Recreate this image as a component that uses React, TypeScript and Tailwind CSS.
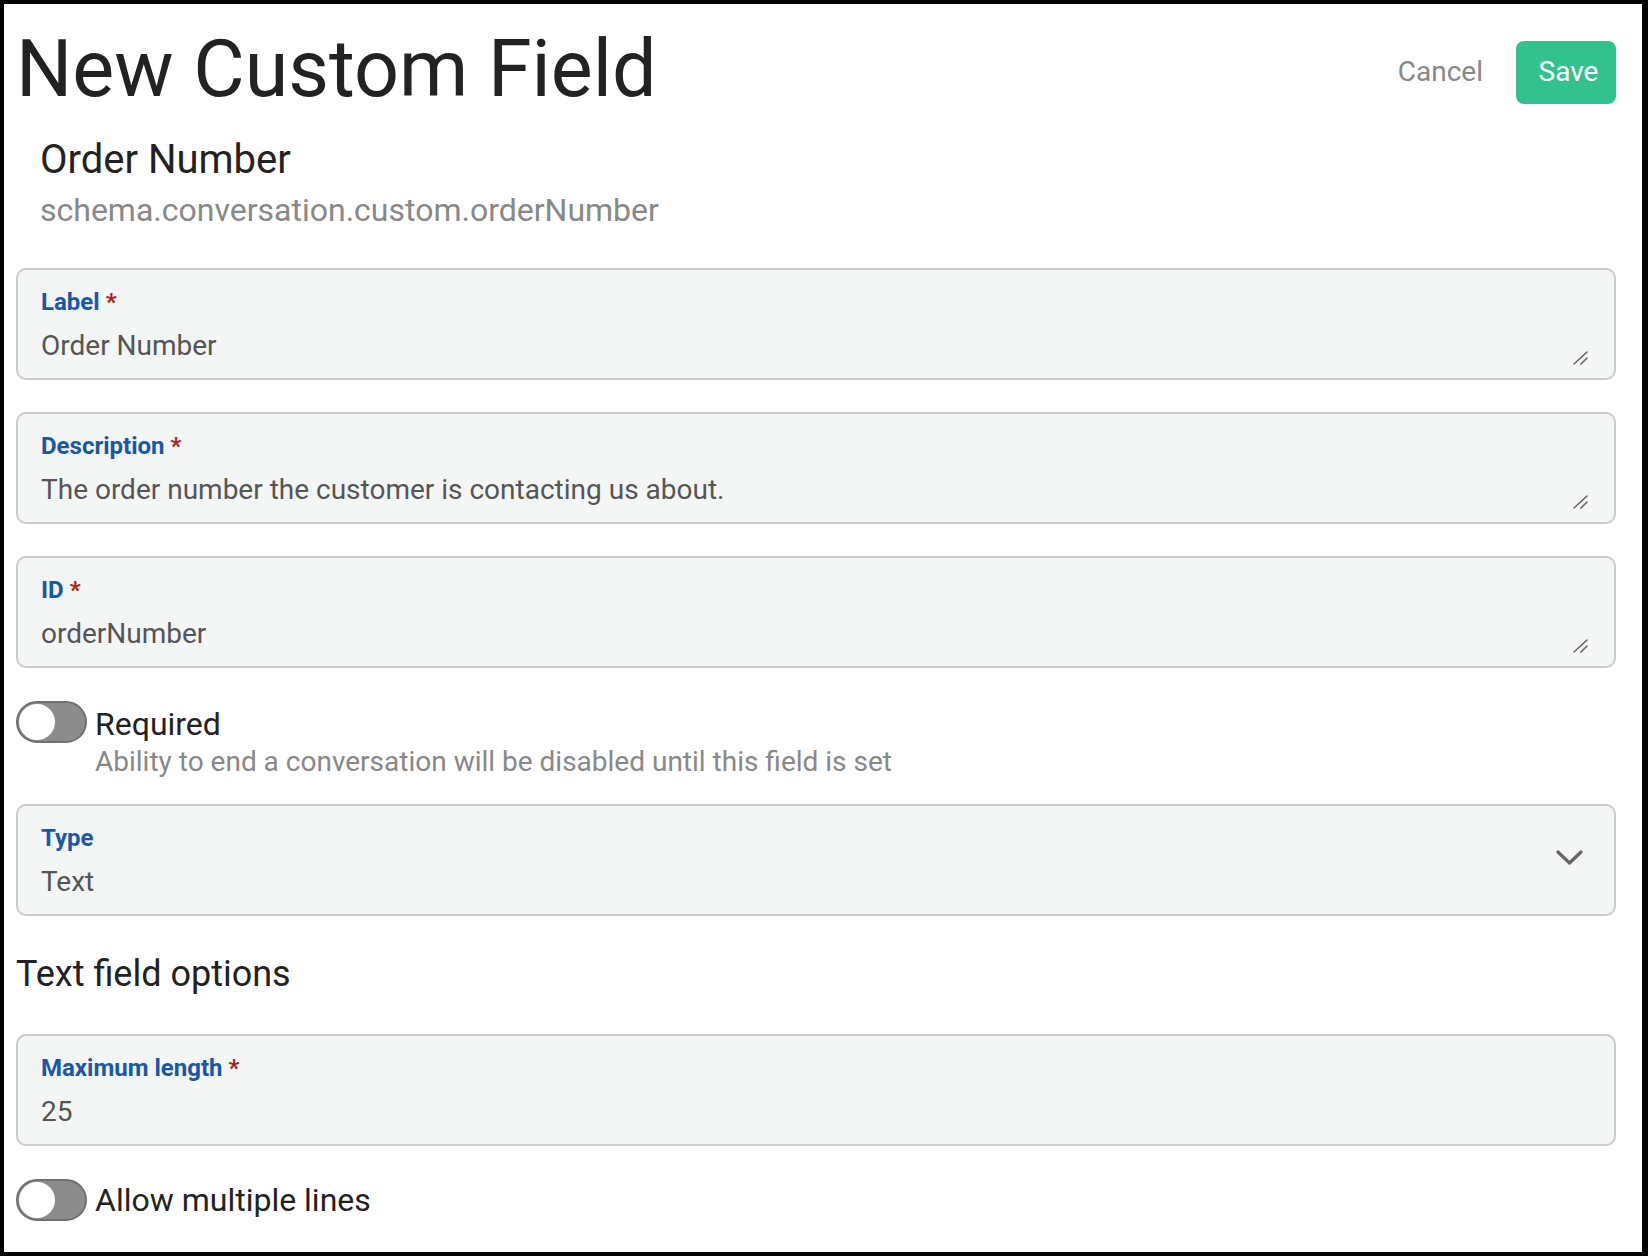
import React from "react";

const font = { fontFamily: "Roboto, 'Noto Sans', sans-serif" };

const ResizeHandle: React.FC = () => (
  <svg
    className="absolute right-[26px] bottom-[13px]"
    width="15"
    height="15"
    viewBox="0 0 15 15"
  >
    <path d="M1 14 L14 2" stroke="#666" strokeWidth="1.6" strokeLinecap="round" />
    <path d="M8 14 L14 8" stroke="#666" strokeWidth="1.6" strokeLinecap="round" />
  </svg>
);

const Field: React.FC<{
  label: string;
  value: string;
  required?: boolean;
  resize?: boolean;
  select?: boolean;
  className?: string;
}> = ({ label, value, required, resize, select, className = "" }) => (
  <div
    className={`relative h-[112px] rounded-[10px] border-2 border-[#c9cbcd] bg-[#f4f5f5] flex ${className}`}
  >
    <div className="flex-1 pl-[23px] pt-[18px]">
      <div className="text-[24px] leading-[28px] font-bold text-[#1858a6]">
        {label}
        {required && <span className="text-[#a82424] ml-[6px]">*</span>}
      </div>
      <div className="mt-[14px] text-[28px] leading-[32px] text-[#555]">{value}</div>
    </div>
    {select && (
      <div className="self-center pr-[31px] pb-[6px]">
        <svg width="27" height="15" viewBox="0 0 27 15">
          <path
            d="M2 2 L13.5 13 L25 2"
            fill="none"
            stroke="#666"
            strokeWidth="3.2"
            strokeLinecap="round"
            strokeLinejoin="round"
          />
        </svg>
      </div>
    )}
    {resize && <ResizeHandle />}
  </div>
);

const Toggle: React.FC = () => (
  <div className="w-[71px] h-[42px] shrink-0 rounded-full bg-[#8c8c8c] border-2 border-[#707070] flex items-center pl-[1px]">
    <div className="w-[36px] h-[36px] rounded-full bg-white" />
  </div>
);

export default function App() {
  return (
    <div
      style={font}
      className="w-[1648px] h-[1256px] bg-white border-l-4 border-t-4 border-b-4 border-r-[6px] border-black pl-[12px] pr-[26px] pt-[26px] text-[#222]"
    >
      {/* Header */}
      <div className="flex items-center justify-between">
        <h1 className="text-[79px] leading-none font-normal text-[#222]">New Custom Field</h1>
        <div className="flex items-center gap-[33px] mt-[5px]">
          <button className="text-[28px] text-[#888]">Cancel</button>
          <button className="h-[63px] w-[100px] rounded-[8px] bg-[#33c18d] text-white text-[28px] pl-[5px]">
            Save
          </button>
        </div>
      </div>

      {/* Field identity */}
      <div className="pl-[24px] mt-[27px]">
        <div className="text-[40px] leading-[47px] text-[#222]">Order Number</div>
        <div className="mt-[8px] text-[32px] leading-[38px] text-[#888]">
          schema.conversation.custom.orderNumber
        </div>
      </div>

      <Field className="mt-[39px]" label="Label" value="Order Number" required resize />
      <Field className="mt-[32px]" label="Description" value="The order number the customer is contacting us about." required resize />
      <Field className="mt-[32px]" label="ID" value="orderNumber" required resize />

      {/* Required toggle */}
      <div className="flex items-start mt-[33px]">
        <Toggle />
        <div className="ml-[8px]">
          <div className="text-[32px] leading-[42px] text-[#222] pt-[2px]">Required</div>
          <div className="mt-[1px] text-[28px] leading-[32px] text-[#888]">
            Ability to end a conversation will be disabled until this field is set
          </div>
        </div>
      </div>

      <Field className="mt-[26px]" label="Type" value="Text" select />

      <h2 className="mt-[37px] text-[36px] leading-[42px] font-normal text-[#222]">Text field options</h2>

      <Field className="mt-[39px]" label="Maximum length" value="25" required />

      <div className="flex items-center mt-[33px]">
        <Toggle />
        <div className="ml-[8px] text-[32px] leading-[42px] text-[#222]">Allow multiple lines</div>
      </div>
    </div>
  );
}
